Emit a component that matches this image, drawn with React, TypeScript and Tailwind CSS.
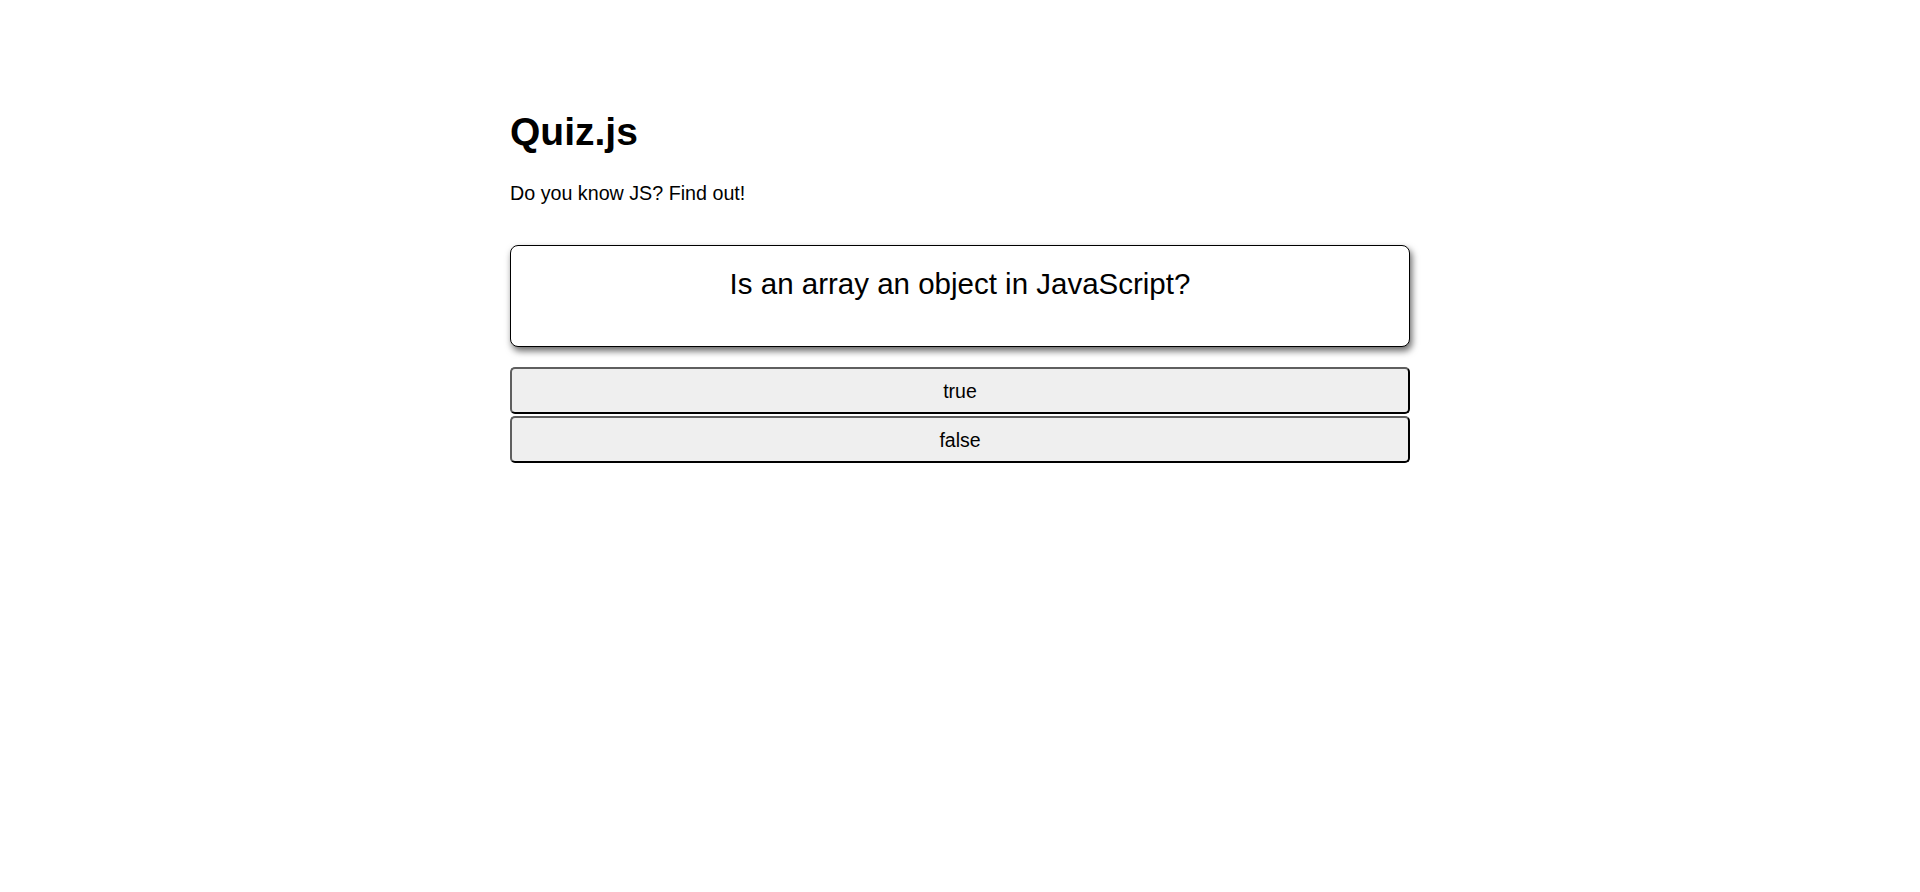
import React from "react";

export default function App() {
  const answers = ["true", "false"];
  return (
    <div className="min-h-[892px] w-full bg-white text-black font-['Liberation_Sans',Arial,sans-serif]">
      <div className="mx-auto w-[900px] pt-[109px]">
        <h1 className="text-[39px] leading-[45px] font-bold">Quiz.js</h1>
        <p className="mt-[28px] text-[19.7px] leading-[22px]">Do you know JS? Find out!</p>
        <div className="mt-[41px] h-[102px] rounded-[8px] border border-black bg-white pt-[21px] shadow-[2px_4px_7px_rgba(0,0,0,0.6)]">
          <h2 className="text-center text-[29.5px] leading-[34px]">Is an array an object in JavaScript?</h2>
        </div>
        <div className="mt-[20px] flex flex-col gap-[2px]">
          {answers.map((a) => (
            <button
              key={a}
              className="flex h-[47px] w-full items-center justify-center rounded-[5px] border-2 border-t-[#5f5f5f] border-l-[#5f5f5f] border-b-black border-r-black bg-[#efefef] text-[19.5px] leading-[22px] text-black"
            >
              {a}
            </button>
          ))}
        </div>
      </div>
    </div>
  );
}
